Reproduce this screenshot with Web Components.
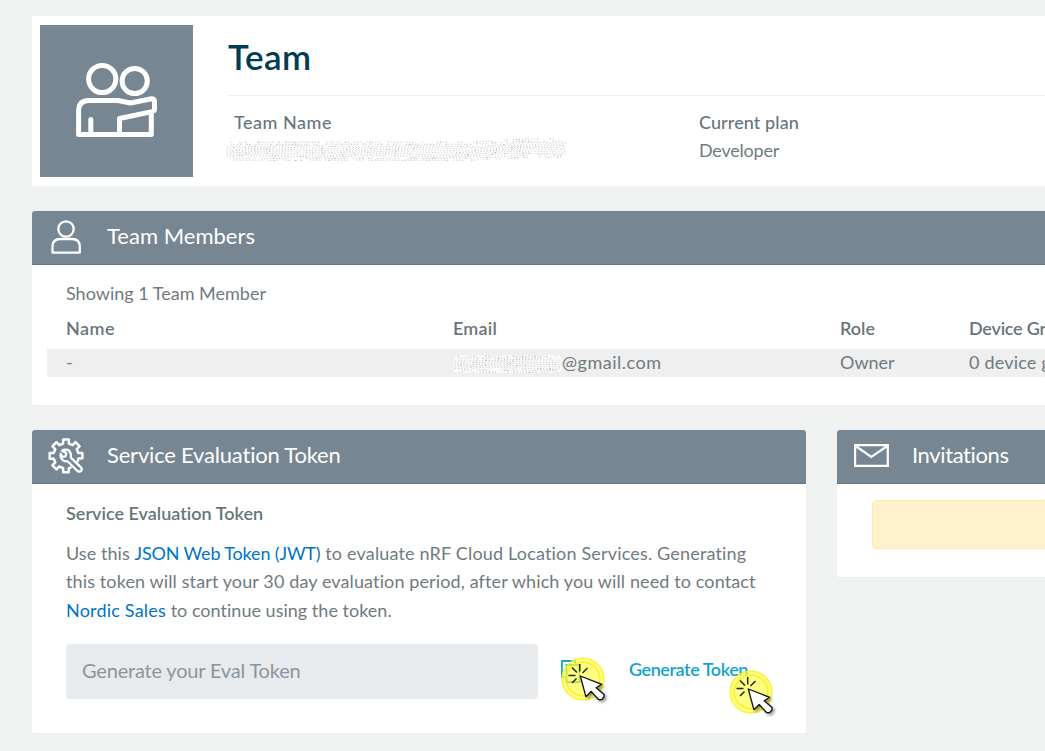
<!DOCTYPE html>
<html lang="en">
<head>
<meta charset="utf-8">
<title>Team</title>
<style>
html,body{margin:0;height:751px;overflow:hidden;background:#f0f2f1}
body{font-family:Lato,"Open Sans",sans-serif;font-size:18px;color:#707a80}
</style>
</head>
<body>
<team-page></team-page>
<script>
function define(name, html, setup) {
  const template = document.createElement('template');
  template.innerHTML = html;
  customElements.define(name, class extends HTMLElement {
    connectedCallback() {
      if (this.shadowRoot) return;
      this.attachShadow({mode: 'open'}).append(template.content.cloneNode(true));
      if (setup) setup(this, this.shadowRoot);
    }
  });
}

// A single line of text tracked to fill the width given in its "w" attribute.
define('text-run', `<style>:host{display:inline-block;white-space:pre;line-height:inherit;vertical-align:top}span{display:inline-block}</style><span><slot></slot></span>`, (el, root) => {
  const target = +el.getAttribute('w');
  const span = root.querySelector('span');
  if (!target) return;
  const extra = (target - span.getBoundingClientRect().width) / el.textContent.length;
  el.style.letterSpacing = extra.toFixed(3) + 'px';
});

// Rows of fine speckled strokes that hide private text.
define('redacted-text', `<style>:host{display:block}svg{display:block;overflow:visible}</style><svg fill="none"></svg>`, (el, root) => {
  const w = +el.getAttribute('w'), h = +el.getAttribute('h'), rise = +el.getAttribute('rise') || 0;
  const svg = root.querySelector('svg');
  svg.setAttribute('width', w); svg.setAttribute('height', h);
  let seed = 17, light = '', dark = '';
  const rnd = () => (seed = (seed * 16807) % 2147483647) / 2147483647;
  const solid = el.hasAttribute('solid');
  for (let y = 1; y < h + 1; y += 2) {
    const edge = y < 4 || y > h - 4;
    const inset = edge ? 5 : 1;
    for (let x = inset + rnd(); x < w - inset; x += 2.9 + rnd() * .3) {
      const lift = x > w * .72 ? rise * Math.min(1, (x - w * .72) / (w * .16)) : 0;
      const s = `M${x.toFixed(1)} ${(y - lift + rnd() * .4).toFixed(1)}l${(1.2 + rnd() * .6).toFixed(1)} ${(edge ? 0 : 1.3 * Math.sin(x / 19 + y / 5)).toFixed(1)}`;
      if (rnd() < .16) dark += s; else if (!edge || rnd() < .7) light += s;
    }
  }
  svg.innerHTML = (solid ? `<rect width="${w}" height="${h}" rx="6" fill="#fafafa"/>` : '') +
    `<path d="${light}" stroke="#c2c2c2" stroke-width=".7"/><path d="${dark}" stroke="#8b8b8b" stroke-width=".65"/>`;
});

define('team-icon', `<style>:host{display:block;width:153px;height:152px;background:#768692}svg{display:block}</style>
<svg width="153" height="152" viewBox="40 25 153 152" fill="none" stroke="#fff" stroke-width="5" stroke-linejoin="round" stroke-linecap="round">
<circle cx="102.2" cy="79" r="13.6"/><circle cx="134.7" cy="81" r="12.6"/>
<path d="M78.6 134.5V111q0-10.500 10.500-10.500H118l12.500 2.500 21-4.200q3 0 3 3v7q0 2.200-2.500 2.800L119.500 118.500v15M151.300 112.500v22H78.600M90.800 134V119.500"/></svg>`);

define('person-icon', `<style>:host{display:block}svg{display:block}</style>
<svg width="36" height="38" viewBox="48 218 36 38" fill="none" stroke="#fff" stroke-width="2.3" stroke-linejoin="round"><circle cx="66" cy="229" r="7.700"/><path d="M52.500 252.700v-6q0-7.700 7.500-7.700h12q7.800 0 7.800 7.700v6z"/></svg>`);

// The gear rim runs clockwise from below the right tooth to the bottom-right one, leaving room for the wrench handle.
define('gear-icon', `<style>:host{display:block}svg{display:block;overflow:visible}</style>
<svg width="36" height="38" viewBox="48 437 36 38" fill="none" stroke="#fff" stroke-width="2.500" stroke-linejoin="round" stroke-linecap="round">
<path class="rim"/>
<path stroke-width="2.300" d="M62 450.800l4.300 2.300-.7 3.200-3.300.7-1.700-3.200q-.3 5.400 3.600 7.200l3.400.3 9.900 9.700q2.300 1.400 3.700-.3 1.300-2-.5-3.600l-9.900-9.500q.8-7.400-4.600-8-2.500-.2-4.200 1.200"/></svg>`, (el, root) => {
  const points = [];
  const add = (deg, r) => points.push((66 + r * Math.cos(deg * Math.PI / 180)).toFixed(2) + ' ' + (455.8 + r * Math.sin(deg * Math.PI / 180)).toFixed(2));
  add(24, 12.8);
  add(12, 12.8); add(8.5, 16.6);
  for (let a = 0; a > -270; a -= 45) {
    if (a) { add(a + 13, 12.6); add(a + 10, 16.6); }
    add(a - 10, 16.6); add(a - 13, 12.6);
  }
  add(-257, 12.6); add(-260, 16.6); add(-279, 16.6); add(-283, 12.6); add(-292, 12.6);
  root.querySelector('.rim').setAttribute('d', 'M' + points.join('L'));
});

define('mail-icon', `<style>:host{display:block}svg{display:block}</style>
<svg width="36" height="38" viewBox="853 436 36 38" fill="none" stroke="#fff" stroke-width="2.200"><path d="M855.100 444.100h32.700v20.700h-32.700zM855.500 445l15.800 11 16-11"/></svg>`);

define('copy-icon', `<style>:host{display:block}svg{display:block}</style>
<svg width="22" height="24" viewBox="561 659 22 24" fill="none" stroke="#17a7cf" stroke-width="1.800"><path d="M564.500 676H562v-16h13v2.500M566.500 664H579.500v17H566.500z"/></svg>`);

define('click-marker', `<style>:host{display:block;position:absolute;width:54px;height:54px}svg{display:block;overflow:visible}</style>
<svg width="54" height="54" viewBox="0 0 54 54"><defs><filter id="s" x="-40%" y="-40%" width="200%" height="200%"><feDropShadow dx="2" dy="2" stdDeviation="1.500" flood-opacity=".4"/></filter></defs>
<circle cx="23" cy="23" r="21.500" fill="#ffff3c" fill-opacity=".66"/><circle cx="23" cy="23" r="20.800" fill="none" stroke="#f7ef22" stroke-width="1.500" opacity=".75"/><circle cx="23" cy="23" r="16.800" fill="none" stroke="#f2e920" stroke-width="1.500" opacity=".75"/>
<path d="M19.700 8v7.500M12 11.500l5 5M27.500 12l-5 5M8.500 19.500h7M12 27l4.500-4.500" stroke="#222" stroke-width="1.500"/>
<path d="M20.300 20l5.600 20.700 5.300-5.300 7.300 8.100q3 1.200 5.500-2.700v-2.200l-7.800-6.800 5.500-3.500z" fill="#fff" stroke="#111" stroke-width="1.300" stroke-linejoin="round" filter="url(#s)"/></svg>`);

define('info-field', `<style>:host{display:block;line-height:28px}.label{font-weight:500;height:28px;color:#68757c}</style><div class="label"><slot name="label"></slot></div><slot></slot>`);

define('team-summary', `<style>
:host{display:flex;box-sizing:border-box;height:170px;background:#fff;padding:9px 8px}
.info{flex:1;margin-left:35px}
h1{margin:0;height:70px;font-size:35px;line-height:62px;font-weight:600;color:#003d53;border-bottom:1px solid #eef0f0}
.fields{display:grid;grid-template-columns:465px 1fr;padding:12px 0 0 6px}
redacted-text{margin:5px 0 0 -9px}
</style>
<team-icon></team-icon>
<div class="info"><h1><text-run w="83.500">Team</text-run></h1>
<div class="fields"><info-field><text-run slot="label" w="98">Team Name</text-run><redacted-text w="341" h="20" rise="3"></redacted-text></info-field>
<info-field><text-run slot="label" w="100">Current plan</text-run><text-run w="80">Developer</text-run></info-field></div></div>`);

define('content-panel', `<style>
:host{display:block;box-sizing:border-box;background:#fff;border-radius:3px;overflow:hidden}
header{display:flex;align-items:center;box-sizing:border-box;height:54px;padding:0 16px 1px;background:#768692;border-bottom:1px solid #647580;color:#fff}
h2{margin:0 0 0 23px;font-size:22px;font-weight:400;line-height:50px;height:52px}
</style><header><slot name="icon"></slot><h2><slot name="title"></slot></h2></header><slot></slot>`);

define('member-table', `<style>
:host{display:block;padding:14px 15px 28px;line-height:28px}
.count{padding-left:19px;height:28px}
.row{display:grid;grid-template-columns:387px 387px 129px 1fr;padding-left:19px;height:28px}
.head{font-weight:600;margin:7px 0 7px;color:#68757c}
.data{background:#efefef;line-height:26px}
.mail{display:flex}
redacted-text{margin-top:6px}
</style>
<div class="count"><text-run w="200">Showing 1 Team Member</text-run></div>
<div class="row head"><text-run w="49">Name</text-run><text-run w="44">Email</text-run><text-run w="35">Role</text-run><text-run w="114">Device Groups</text-run></div>
<div class="row data"><text-run w="7">-</text-run><div class="mail"><redacted-text w="109" h="18" solid></redacted-text><text-run w="99.500">@gmail.com</text-run></div><text-run w="54.500">Owner</text-run><text-run w="127">0 device groups</text-run></div>`);

define('token-form', `<style>
:host{display:block;padding:15px 34px 34px}
h3{margin:0;font-size:18px;font-weight:600;line-height:28px;height:28px;color:#68757c}
p{margin:11.500px 0 20px;line-height:28.500px}
.line{display:block;height:28.500px;white-space:nowrap}
a{color:#0074c5}
.controls{display:flex;align-items:center;height:55px}
.input{box-sizing:border-box;width:472px;height:55px;padding-left:16px;border-radius:4px;background:#e8ebed;color:#8b959d;font-size:20px;line-height:52px}
.copy{position:relative;margin-left:23px}
.generate{position:relative;margin-left:46px;color:#12a3cb;font-weight:600;line-height:25px;height:30px}
.copy click-marker{left:-1px;top:-4px}
.generate click-marker{left:99px;top:12px}
</style>
<h3><text-run w="197.500">Service Evaluation Token</text-run></h3>
<p><span class="line"><text-run w="68.500">Use this </text-run><a><text-run w="186">JSON Web Token (JWT)</text-run></a><text-run w="426.500"> to evaluate nRF Cloud Location Services. Generating</text-run></span><span class="line"><text-run w="689.500">this token will start your 30 day evaluation period, after which you will need to contact</text-run></span><span class="line"><a><text-run w="100">Nordic Sales</text-run></a><text-run w="226"> to continue using the token.</text-run></span></p>
<div class="controls"><div class="input"><text-run w="218.500">Generate your Eval Token</text-run></div>
<div class="copy"><copy-icon></copy-icon><click-marker></click-marker></div>
<div class="generate"><text-run w="119">Generate Token</text-run><click-marker></click-marker></div></div>`);

define('invite-notice', `<style>:host{display:block;box-sizing:border-box;height:49px;margin:16px 35px 28px;border:1px solid #ffe9b0;border-radius:4px;background:#fff1cc}</style>`);

define('team-page', `<style>
:host{display:block;box-sizing:border-box;width:1045px;height:751px;overflow:hidden}
main{box-sizing:border-box;width:1643px;padding:16px 32px;display:grid;gap:25px}
.lower{display:grid;grid-template-columns:774px 774px;gap:31px;align-items:start}
.members{height:194px}.token{height:303px}.invites{height:147px}
</style>
<main><team-summary></team-summary>
<content-panel class="members"><person-icon slot="icon"></person-icon><text-run slot="title" w="148">Team Members</text-run><member-table></member-table></content-panel>
<div class="lower"><content-panel class="token"><gear-icon slot="icon"></gear-icon><text-run slot="title" w="234">Service Evaluation Token</text-run><token-form></token-form></content-panel>
<content-panel class="invites"><mail-icon slot="icon"></mail-icon><text-run slot="title" w="97">Invitations</text-run><invite-notice></invite-notice></content-panel></div></main>`);
</script>
</body>
</html>
